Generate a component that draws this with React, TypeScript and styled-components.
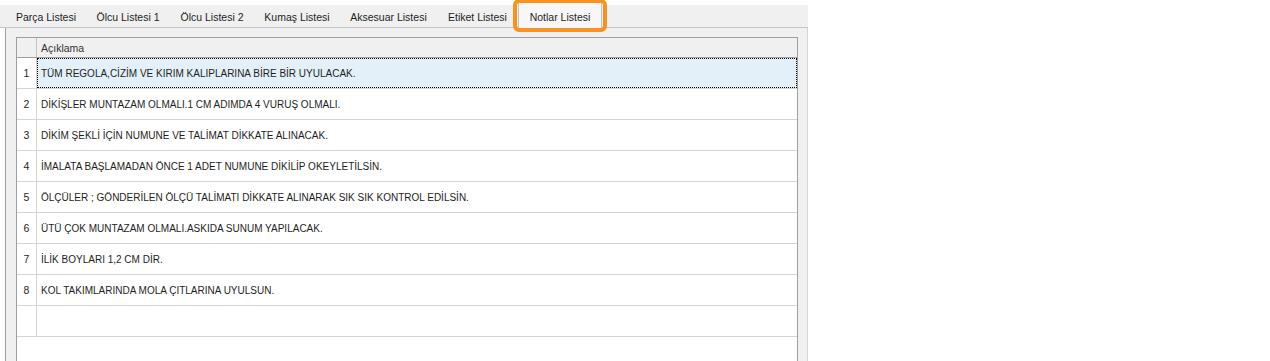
import React from "react";
import styled, { createGlobalStyle } from "styled-components";

const GlobalStyle = createGlobalStyle`
  body {
    margin: 0;
    background: #ffffff;
    font-family: "Liberation Sans", Arial, sans-serif;
    font-size: 10.5px;
    color: #1e1e1e;
  }
`;

const tabs = [
  { label: "Parça Listesi", width: 80 },
  { label: "Ölcu Listesi 1", width: 84 },
  { label: "Ölcu Listesi 2", width: 84 },
  { label: "Kumaş Listesi", width: 86 },
  { label: "Aksesuar Listesi", width: 97 },
  { label: "Etiket Listesi", width: 81 },
  { label: "Notlar Listesi", width: 84, active: true },
];

const notes = [
  "TÜM REGOLA,CİZİM VE KIRIM KALIPLARINA BİRE BİR UYULACAK.",
  "DİKİŞLER MUNTAZAM OLMALI.1 CM ADIMDA 4 VURUŞ OLMALI.",
  "DİKİM ŞEKLİ İÇİN NUMUNE VE TALİMAT DİKKATE ALINACAK.",
  "İMALATA BAŞLAMADAN ÖNCE 1 ADET NUMUNE DİKİLİP OKEYLETİLSİN.",
  "ÖLÇÜLER ; GÖNDERİLEN ÖLÇÜ TALİMATI DİKKATE ALINARAK SIK SIK KONTROL EDİLSİN.",
  "ÜTÜ ÇOK MUNTAZAM OLMALI.ASKIDA SUNUM YAPILACAK.",
  "İLİK BOYLARI 1,2 CM DİR.",
  "KOL TAKIMLARINDA MOLA ÇITLARINA UYULSUN.",
];

const App = () => {
  return (
    <Page>
      <GlobalStyle />
      <TabStrip>
        {tabs.map((t) => (
          <Tab key={t.label} w={t.width} active={!!t.active}>
            {t.label}
            {t.active && <Highlight />}
          </Tab>
        ))}
      </TabStrip>
      <Panel>
        <Grid>
          <Row head>
            <NumCell head />
            <TextCell head>Açıklama</TextCell>
          </Row>
          {notes.map((n, i) => (
            <Row key={i}>
              <NumCell>{i + 1}</NumCell>
              <TextCell focused={i === 0}>{n}</TextCell>
            </Row>
          ))}
          <Row>
            <NumCell />
            <TextCell />
          </Row>
        </Grid>
      </Panel>
    </Page>
  );
};

export default App;

const Page = styled.div`
  width: 808px;
  height: 361px;
  display: flex;
  flex-direction: column;
  overflow: hidden;
`;

const TabStrip = styled.div`
  display: flex;
  align-items: flex-end;
  height: 22px;
  margin-top: 5px;
  padding-left: 6px;
  background: #f0f0f0;
  border-bottom: 1px solid #c4c4c4;
  position: relative;
  z-index: 1;
  flex-shrink: 0;
`;

const Tab = styled.div<{ w: number; active: boolean }>`
  position: relative;
  box-sizing: border-box;
  width: ${({ w }) => w}px;
  height: ${({ active }) => (active ? 26 : 22)}px;
  margin-bottom: ${({ active }) => (active ? -1 : 0)}px;
  display: flex;
  align-items: center;
  justify-content: center;
  padding-top: ${({ active }) => (active ? 3 : 0)}px;
  background: ${({ active }) => (active ? "#f7f7f7" : "transparent")};
  border: 1px solid ${({ active }) => (active ? "#c4c4c4" : "transparent")};
  border-bottom: none;
  white-space: nowrap;
  color: #1e1e1e;
`;

const Highlight = styled.div`
  position: absolute;
  left: -6px;
  right: -6px;
  top: -4px;
  bottom: -4px;
  border: 4px solid #f7931e;
  border-radius: 6px;
  pointer-events: none;
`;

const Panel = styled.div`
  flex: 1;
  margin-left: 5px;
  padding: 9px 9px 0 10px;
  background: #f0f0f0;
  border-left: 1px solid #a0a0a0;
  border-right: 1px solid #d4d4d4;
  display: flex;
  min-height: 0;
`;

const Grid = styled.div`
  flex: 1;
  background: #ffffff;
  border: 1px solid #a0a0a0;
  border-bottom: none;
  display: flex;
  flex-direction: column;
`;

const Row = styled.div<{ head?: boolean }>`
  display: flex;
  height: ${({ head }) => (head ? 19 : 30)}px;
  border-bottom: 1px solid ${({ head }) => (head ? "#a0a0a0" : "#d4d4d4")};
  background: ${({ head }) => (head ? "#f0f0f0" : "#ffffff")};
  flex-shrink: 0;
`;

const NumCell = styled.div<{ head?: boolean }>`
  width: 19px;
  border-right: 1px solid ${({ head }) => (head ? "#c4c4c4" : "#d4d4d4")};
  display: flex;
  align-items: center;
  justify-content: center;
  color: #1e1e1e;
`;

const TextCell = styled.div<{ head?: boolean; focused?: boolean }>`
  flex: 1;
  box-sizing: border-box;
  display: flex;
  align-items: center;
  padding-left: 3px;
  white-space: nowrap;
  font-size: ${({ head }) => (head ? 10.5 : 10)}px;
  color: ${({ head }) => (head ? "#333333" : "#1e1e1e")};
  background: ${({ focused }) => (focused ? "#e4f0f9" : "transparent")};
  border: 1px dotted ${({ focused }) => (focused ? "#000000" : "transparent")};
`;
